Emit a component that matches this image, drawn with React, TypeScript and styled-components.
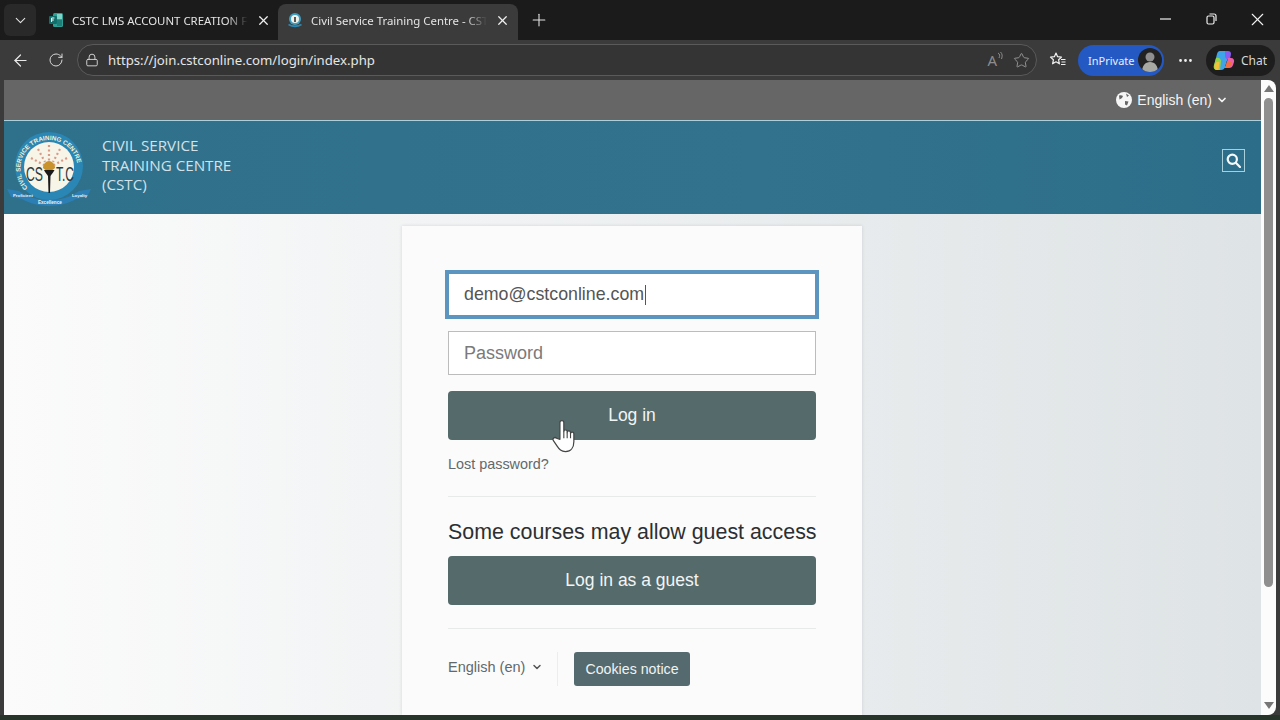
import React, { ReactElement } from 'react'
import styled, { createGlobalStyle } from 'styled-components'
import { ArrowLeft, ChevronDown, Lock, MoreHorizontal, Plus, RotateCw, Star, X } from 'lucide-react'

const GlobalStyle = createGlobalStyle`
  html, body { margin: 0; padding: 0; height: 720px; overflow: hidden; background: #333; }
  * { box-sizing: border-box; }
  #root { font-family: "Liberation Sans", Arial, sans-serif; }
`

const Screen = styled.div`
  position: relative;
  width: 1280px;
  height: 720px;
  display: flex;
  flex-direction: column;
  overflow: hidden;
  background: #3b3b3b;
`

const TabBar = styled.div`
  height: 40px;
  flex: none;
  display: flex;
  align-items: flex-end;
  background: #1b1b1b;
  color: #e4e4e4;
  font-family: "Noto Sans", sans-serif;
  font-size: 11.4px;
`

const TabMenu = styled.div`
  width: 32px;
  height: 32px;
  margin: 0 0 4px 4px;
  border-radius: 6px;
  background: #292929;
  display: flex;
  align-items: center;
  justify-content: center;
`

const Tab = styled.div<{ $active?: boolean }>`
  width: ${(p) => (p.$active ? '240px' : '237px')};
  height: ${(p) => (p.$active ? '36px' : '40px')};
  margin-left: ${(p) => (p.$active ? '0' : '5px')};
  padding: ${(p) => (p.$active ? '0 8px 4px 9px' : '0 7px 0 7px')};
  border-radius: 8px 8px 0 0;
  background: ${(p) => (p.$active ? '#3b3b3b' : 'transparent')};
  display: flex;
  align-items: center;
  gap: 8px;
`

const TabTitle = styled.span`
  flex: 1;
  overflow: hidden;
  white-space: nowrap;
  -webkit-mask-image: linear-gradient(90deg, #000 88%, transparent);
  mask-image: linear-gradient(90deg, #000 88%, transparent);
`

const NewTab = styled.div`
  margin: 0 0 10px 11px;
  display: flex;
`

const WindowButtons = styled.div`
  margin-left: auto;
  height: 40px;
  display: flex;
`

const WindowButton = styled.div`
  width: 46px;
  height: 40px;
  padding-bottom: 2px;
  display: flex;
  align-items: center;
  justify-content: center;
`

const Toolbar = styled.div`
  height: 40px;
  flex: none;
  padding-left: 11px;
  display: flex;
  align-items: center;
  background: #3b3b3b;
`

const ToolIcon = styled.div<{ $left?: number }>`
  display: flex;
  margin-left: ${(p) => p.$left ?? 0}px;
`

const AddressBar = styled.div`
  width: 960px;
  height: 32px;
  margin-left: 13px;
  padding: 0 6px 0 7px;
  border: 1px solid #5a5a5a;
  border-radius: 16px;
  background: #343434;
  display: flex;
  align-items: center;
  gap: 9px;
  color: #e6e6e6;
  font-family: "Noto Sans", sans-serif;
  font-size: 13.2px;
`

const AddressRight = styled.div`
  margin-left: auto;
  display: flex;
  align-items: center;
  gap: 10px;
`

const ReadAloud = styled.span`
  display: flex;
  align-items: flex-start;
  color: #8c8c8c;
  font-size: 15px;
  line-height: 17px;
`

const InPrivate = styled.div`
  width: 86px;
  height: 31px;
  margin: 0 0 0 11px;
  padding: 0 2px 0 10px;
  border-radius: 16px;
  background: #2459c4;
  color: #e6eefc;
  font-family: "Noto Sans", sans-serif;
  font-size: 11px;
  display: flex;
  align-items: center;
  justify-content: space-between;
`

const Avatar = styled.div`
  width: 24px;
  height: 24px;
  border-radius: 50%;
  overflow: hidden;
  background: #222;
  display: flex;
`

const ChatPill = styled.div`
  width: 69px;
  height: 31px;
  margin-left: 12px;
  padding: 0 0 0 6px;
  border-radius: 16px;
  background: #1d1d1d;
  color: #d8d8d8;
  font-family: "Noto Sans", sans-serif;
  font-size: 12px;
  display: flex;
  align-items: center;
  gap: 5px;
`

const Viewport = styled.div`
  flex: 1;
  min-height: 0;
  padding-left: 4px;
  padding-right: 4px;
  display: flex;
`

const Page = styled.div`
  flex: 1;
  display: flex;
  flex-direction: column;
  background: linear-gradient(90deg, #fbfbfb 0%, #f0f2f3 40%, #dee3e5 100%);
  overflow: hidden;
`

const LanguageBar = styled.div`
  height: 41px;
  flex: none;
  padding-right: 33px;
  display: flex;
  align-items: center;
  justify-content: flex-end;
  gap: 4px;
  background: #666;
  border-bottom: 1px solid #a9d0dc;
  color: #f4f4f4;
  font-size: 14px;
`

const GlobeWrap = styled.span`
  display: flex;
  margin-right: 1px;
`

const SiteHeader = styled.header`
  height: 93px;
  flex: none;
  padding: 0 16px 0 2px;
  display: flex;
  align-items: center;
  background: linear-gradient(90deg, #2f708a 0%, #33728d 60%, #2c6e89 100%);
  color: #d3e2e8;
`

const SiteName = styled.div`
  margin: 0 0 4px 8px;
  font-family: "Open Sans", sans-serif;
  font-size: 15.2px;
  line-height: 19.5px;
`

const SearchBox = styled.div`
  margin: 0 0 14px auto;
  width: 23px;
  height: 23px;
  border: 1px solid #a7d0dc;
  display: flex;
  align-items: center;
  justify-content: center;
`

const Main = styled.main`
  flex: 1;
  padding: 12px 1px 0 0;
  display: flex;
  justify-content: center;
`

const Card = styled.section`
  width: 460px;
  padding: 47px 46px 0;
  background: #fbfbfb;
  box-shadow: 0 0 3px rgba(120, 130, 135, 0.25);
  display: flex;
  flex-direction: column;
`

const Field = styled.div<{ $focused?: boolean }>`
  height: ${(p) => (p.$focused ? '43px' : '44px')};
  margin-bottom: ${(p) => (p.$focused ? '15px' : '16px')};
  padding: 0 15px;
  display: flex;
  align-items: center;
  background: #fff;
  border: 1px solid ${(p) => (p.$focused ? '#5c96c0' : '#bcbcbc')};
  outline: ${(p) => (p.$focused ? '3px solid #5c96c0' : 'none')};
  font-size: ${(p) => (p.$focused ? '17.8px' : '18px')};
  color: ${(p) => (p.$focused ? '#555' : '#7a7a7a')};
`

const Caret = styled.span`
  width: 1px;
  height: 20px;
  margin-left: 1px;
  background: #555;
`

const PrimaryButton = styled.div`
  height: 49px;
  flex: none;
  border-radius: 4px;
  background: #546a6b;
  color: #f2f5f5;
  font-size: 17.5px;
  display: flex;
  align-items: center;
  justify-content: center;
`

const LostPassword = styled.div`
  margin-top: 16px;
  color: #62696c;
  font-size: 14.4px;
  line-height: 16px;
`

const Rule = styled.hr<{ $top: number }>`
  width: 100%;
  margin: ${(p) => p.$top}px 0 0;
  border: 0;
  border-top: 1px solid #e8eaea;
`

const GuestTitle = styled.h2`
  margin: 24px 0 12px;
  color: #2c2f31;
  font-size: 21.4px;
  font-weight: 400;
  line-height: 23px;
  white-space: nowrap;
`

const CardFooter = styled.div`
  margin-top: 23px;
  display: flex;
  align-items: center;
`

const FooterLanguage = styled.div`
  width: 110px;
  height: 34px;
  margin-right: 16px;
  padding-bottom: 5px;
  border-right: 1px solid #eceeee;
  color: #62696c;
  font-size: 14.5px;
  display: flex;
  align-items: center;
  gap: 6px;
`

const CookiesButton = styled.div`
  width: 116px;
  height: 34px;
  border-radius: 3px;
  background: #546a6e;
  color: #f0f3f3;
  font-size: 14.2px;
  display: flex;
  align-items: center;
  justify-content: center;
`

const Scrollbar = styled.div`
  width: 15px;
  flex: none;
  padding: 5px 3px 6px;
  border-radius: 0 8px 8px 0;
  background: #fcfcfc;
  display: flex;
  flex-direction: column;
  align-items: center;
`

const ScrollThumb = styled.div`
  width: 9px;
  height: 489px;
  margin-top: 6px;
  border-radius: 5px;
  background: #8f8f8f;
`

const ScrollArrow = styled.div<{ $down?: boolean }>`
  width: 0;
  height: 0;
  border-left: 5px solid transparent;
  border-right: 5px solid transparent;
  ${(p) => (p.$down ? 'border-top: 7px solid #777; margin-top: auto;' : 'border-bottom: 7px solid #777;')}
`

const BottomStrip = styled.div`
  height: 5px;
  flex: none;
  background: #26342a;
`

const HandCursor = styled.svg`
  position: absolute;
  left: 551px;
  top: 417px;
`

const FormsIcon = () => (
  <svg width="16" height="16" viewBox="0 0 16 16" style={{ flex: 'none' }}>
    <rect x="5" y="1" width="10" height="14" rx="1.5" fill="#2f9e94" />
    <rect x="9" y="2" width="5" height="5" fill="#7fd4c8" />
    <rect x="9" y="8" width="5" height="6" fill="#1f7f78" />
    <rect x="1" y="4" width="8" height="8" rx="1" fill="#0f6f6a" />
    <path d="M3.6 10V6h2.8M3.6 8h2.2" stroke="#fff" strokeWidth="1" fill="none" />
  </svg>
)

const TabLogo = () => (
  <svg width="16" height="16" viewBox="0 0 16 16" style={{ flex: 'none' }}>
    <circle cx="8" cy="7" r="6" fill="#3f9fc0" />
    <circle cx="8" cy="7" r="4" fill="#f1f1ea" />
    <path d="M8 5v5" stroke="#333" strokeWidth="1.6" />
    <path d="M1.5 12.5 Q8 16 14.5 12.5" stroke="#2f86b0" strokeWidth="1.8" fill="none" />
  </svg>
)

const CollectionsIcon = () => (
  <svg width="18" height="18" viewBox="0 0 18 18" fill="none" stroke="#f0f0f0" strokeWidth="1.2" strokeLinejoin="round">
    <path d="M7 2l1.6 3.7 3.9.4-2.9 2.7.8 4-3.4-2-3.4 2 .8-4L1.5 6.1l3.900-.4z" />
    <path d="M12 8.500h4.500M12.500 11h4M12 13.500h4.500" />
  </svg>
)

const CopilotIcon = () => (
  <svg width="24" height="24" viewBox="0 0 24 24">
    <path d="M8 3h6c2 0 3 1 3 3l-4 13c-.5 2-2 3-4 3H5c-2 0-3.500-2-3-4L5 6c.5-2 1.500-3 3-3z" fill="#3fa5e8" />
    <path d="M4 10c2-1 5 0 5 3l-1 9H5c-2.500 0-4-2-3-5z" fill="#8bd34a" />
    <path d="M2.500 17c1-3 3-4 5-3l-1 8H5c-2 0-3-2.500-2.500-5z" fill="#f4c13a" />
    <path d="M13 3h3c2 0 3 1 3 3l-1 5c-2 1-5 0-5-3z" fill="#8a5cf0" />
    <path d="M16 10h3c2.500 0 3.500 2 3 4l-1 3c-.5 2-2 3-4 3h-6c2 0 2.500-1.500 3-3z" fill="#ec5fa6" />
    <path d="M15 14h5l-1 3c-.5 1.500-2 3-4 3h-4c2 0 2.500-1.500 3-3z" fill="#f0703f" />
  </svg>
)

const ProfilePhoto = () => (
  <svg width="24" height="24" viewBox="0 0 24 24">
    <circle cx="12" cy="9" r="4.500" fill="#8f8f8f" />
    <path d="M4 24c0-6 3-10 8-10s8 4 8 10z" fill="#a9a9a4" />
  </svg>
)

const GlobeIcon = () => (
  <svg width="16" height="16" viewBox="0 0 16 16">
    <circle cx="8" cy="8" r="8" fill="#f6f6f6" />
    <path d="M3 3.500c1.500-.5 3-.5 4 .5l-1 2-2.500 1.500zM9 9l3.500.5-1.500 4-2-1zM10 1.500l3 2-2 1.500z" fill="#666" />
  </svg>
)

const SearchIcon = () => (
  <svg width="15" height="15" viewBox="0 0 15 15" fill="none" stroke="#f4fafc" strokeWidth="2.200">
    <circle cx="6.300" cy="6.300" r="4.600" />
    <path d="M9.800 9.800L14 14" strokeLinecap="round" />
  </svg>
)

const Logo = () => (
  <svg width="88" height="78" viewBox="0 0 88 78" style={{ flex: 'none' }}>
    <defs>
      <path id="ring" d="M21.800 58.800a28.600 28.600 0 1 1 42.400 0" />
    </defs>
    <circle cx="43" cy="37" r="34" fill="#2a86b4" />
    <circle cx="43" cy="38" r="25" fill="#f7f4e8" />
    <text fontFamily="Liberation Sans" fontSize="6.300" fontWeight="700" fill="#f6f1cf">
      <textPath href="#ring">CIVIL SERVICE TRAINING CENTRE</textPath>
    </text>
    <path d="M43 16v17M32 20l7 13M54 20l-7 13M25 29l13 7M61 29l-13 7" stroke="#d99a86" strokeWidth="2.200" strokeDasharray="2 2.500" />
    <text x="20" y="52" fontFamily="Liberation Sans" fontSize="20" fill="#2b3a42" textLength="17" lengthAdjust="spacingAndGlyphs">CS</text>
    <text x="50" y="52" fontFamily="Liberation Sans" fontSize="20" fill="#2b3a42" textLength="18" lengthAdjust="spacingAndGlyphs">T.C</text>
    <path d="M37 39c0-4 3-7 6-7s6 3 6 7c-2 2-4 3-6 3s-4-1-6-3z" fill="#c9922c" />
    <path d="M38 41c1.500 3 3 4 4 6l.5 17h1.500l.5-17c1-2 2.500-3 4-6z" fill="#1b1b1b" />
    <path d="M1 60l12 2c8 6 18 9 30 9s22-3 30-9l12-2-4 8-11 2c-7 4-16 7-27 7s-20-3-27-7l-11-2z" fill="#2b7fb5" />
    <text x="7" y="68" fontFamily="Liberation Sans" fontSize="4.300" fontWeight="700" fill="#e9f2f6">Proficient</text>
    <text x="32" y="75" fontFamily="Liberation Sans" fontSize="4.600" fontWeight="700" fill="#e9f2f6">Excellence</text>
    <text x="66" y="68" fontFamily="Liberation Sans" fontSize="4.300" fontWeight="700" fill="#e9f2f6">Loyalty</text>
  </svg>
)

const App = (): ReactElement => (
  <Screen>
    <GlobalStyle />
    <TabBar>
      <TabMenu>
        <ChevronDown size={17} strokeWidth={1.5} color="#e4e4e4" />
      </TabMenu>
      <Tab>
        <FormsIcon />
        <TabTitle>CSTC LMS ACCOUNT CREATION FORM</TabTitle>
        <X size={15} color="#efefef" />
      </Tab>
      <Tab $active>
        <TabLogo />
        <TabTitle>Civil Service Training Centre - CSTC</TabTitle>
        <X size={15} color="#efefef" />
      </Tab>
      <NewTab>
        <Plus size={20} strokeWidth={1.3} color="#e4e4e4" />
      </NewTab>
      <WindowButtons>
        <WindowButton>
          <svg width="11" height="2" viewBox="0 0 11 2"><path d="M0 1h11" stroke="#eee" strokeWidth="1.200" /></svg>
        </WindowButton>
        <WindowButton>
          <svg width="11" height="12" viewBox="0 0 11 12" fill="none" stroke="#eee" strokeWidth="1.200">
            <rect x="1" y="3" width="7" height="8" rx="1.500" />
            <path d="M3.500 1h4.500c1.200 0 2 .8 2 2v5" />
          </svg>
        </WindowButton>
        <WindowButton>
          <X size={21} strokeWidth={1.3} color="#f2f2f2" />
        </WindowButton>
      </WindowButtons>
    </TabBar>
    <Toolbar>
      <ToolIcon><ArrowLeft size={19} strokeWidth={1.5} color="#e8e8e8" /></ToolIcon>
      <ToolIcon $left={18}><RotateCw size={16} strokeWidth={1.5} color="#d8d8d8" /></ToolIcon>
      <AddressBar>
        <Lock size={14} strokeWidth={1.6} color="#d8d8d8" />
        <span>https://join.cstconline.com/login/index.php</span>
        <AddressRight>
          <ReadAloud>
            A
            <svg width="6" height="9" viewBox="0 0 6 9" fill="none" stroke="#8c8c8c" strokeWidth="1">
              <path d="M1 1c2 1 2 3 1 5M3.500 0c2 2 2 4 1 7" />
            </svg>
          </ReadAloud>
          <Star size={17} strokeWidth={1.3} color="#9a9a9a" />
        </AddressRight>
      </AddressBar>
      <ToolIcon $left={12}><CollectionsIcon /></ToolIcon>
      <InPrivate>
        InPrivate
        <Avatar><ProfilePhoto /></Avatar>
      </InPrivate>
      <ToolIcon $left={13}><MoreHorizontal size={17} color="#eee" /></ToolIcon>
      <ChatPill>
        <CopilotIcon />
        Chat
      </ChatPill>
    </Toolbar>
    <Viewport>
      <Page>
        <LanguageBar>
          <GlobeWrap><GlobeIcon /></GlobeWrap>
          English (en)
          <ChevronDown size={12} strokeWidth={3.5} color="#f4f4f4" />
        </LanguageBar>
        <SiteHeader>
          <Logo />
          <SiteName>
            CIVIL SERVICE
            <br />
            TRAINING CENTRE
            <br />
            (CSTC)
          </SiteName>
          <SearchBox><SearchIcon /></SearchBox>
        </SiteHeader>
        <Main>
          <Card>
            <Field $focused>
              demo@cstconline.com
              <Caret />
            </Field>
            <Field>Password</Field>
            <PrimaryButton>Log in</PrimaryButton>
            <LostPassword>Lost password?</LostPassword>
            <Rule $top={24} />
            <GuestTitle>Some courses may allow guest access</GuestTitle>
            <PrimaryButton>Log in as a guest</PrimaryButton>
            <Rule $top={23} />
            <CardFooter>
              <FooterLanguage>
                English (en)
                <ChevronDown size={12} strokeWidth={3} color="#555" />
              </FooterLanguage>
              <CookiesButton>Cookies notice</CookiesButton>
            </CardFooter>
          </Card>
        </Main>
      </Page>
      <Scrollbar>
        <ScrollArrow />
        <ScrollThumb />
        <ScrollArrow $down />
      </Scrollbar>
    </Viewport>
    <BottomStrip />
    <HandCursor width="29" height="38" viewBox="0 0 26 34">
      <path
        d="M8 20V5c0-2.500 3.500-2.500 3.500 0v8c0-2 3-2 3 0v1c0-2 3-2 3 0v1c0-2 3-2 3 0v7c0 5-2.500 9-7.500 9-4 0-5.500-2-7.500-5l-3.500-5c-1-2 1.500-3.500 3-2z"
        fill="#fff"
        stroke="#444"
        strokeWidth="1.100"
        strokeLinejoin="round"
      />
      <path d="M11.500 13v6M14.500 14v5M17.500 15v4" stroke="#444" strokeWidth="1" />
    </HandCursor>
  </Screen>
)

export default App
